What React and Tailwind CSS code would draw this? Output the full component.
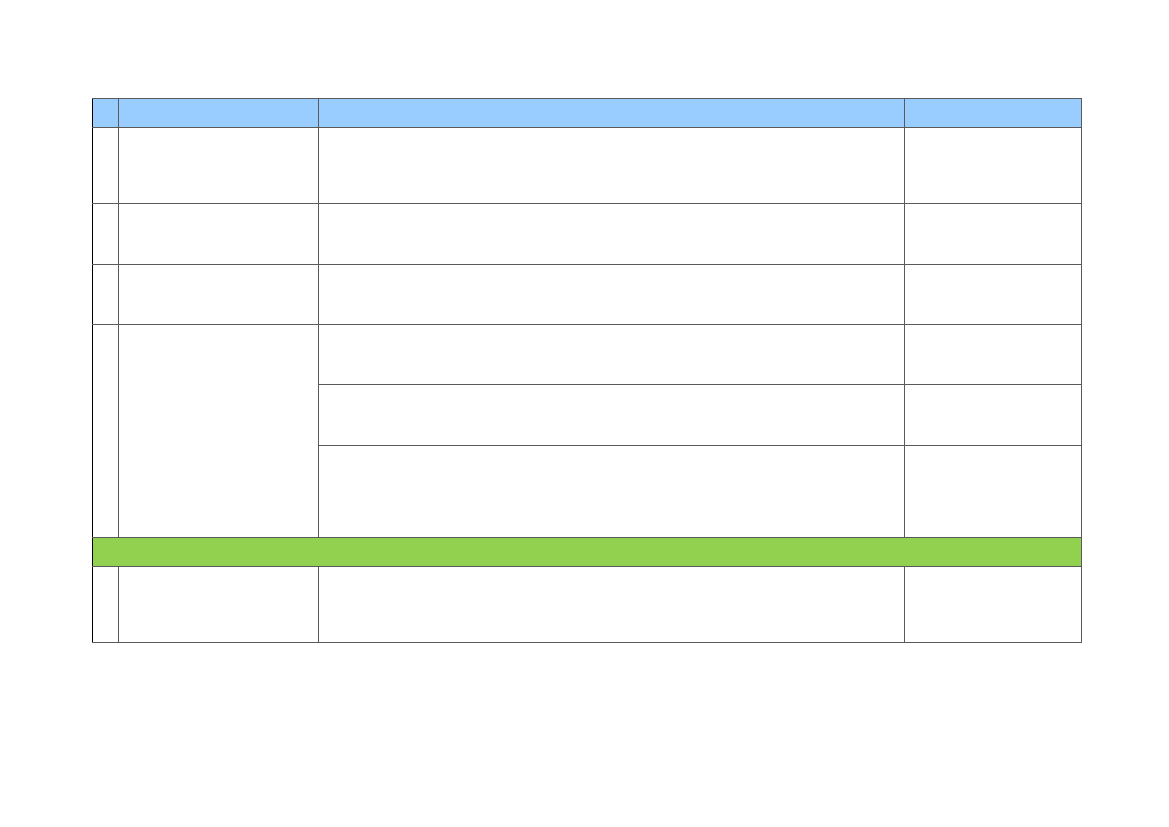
import React from "react";

const cell = "border border-[#5a5a5a] p-0";

export default function App() {
  return (
    <div className="w-[1169px] h-[827px] bg-white pt-[98px] pl-[92px] font-['Liberation_Sans',sans-serif]">
      <table className="table-fixed border-collapse w-[989px] border-l-black">
        <colgroup>
          <col className="w-[26px]" />
          <col className="w-[200px]" />
          <col className="w-[586px]" />
          <col className="w-[177px]" />
        </colgroup>
        <tbody>
          {/* header */}
          <tr className="h-[29px] bg-[#99ccff]">
            <td className={`${cell} border-l-black`} />
            <td className={cell} />
            <td className={cell} />
            <td className={cell} />
          </tr>
          <tr className="h-[76px]">
            <td className={`${cell} border-l-black`} />
            <td className={cell} />
            <td className={cell} />
            <td className={cell} />
          </tr>
          <tr className="h-[61px]">
            <td className={`${cell} border-l-black`} />
            <td className={cell} />
            <td className={cell} />
            <td className={cell} />
          </tr>
          <tr className="h-[60px]">
            <td className={`${cell} border-l-black`} />
            <td className={cell} />
            <td className={cell} />
            <td className={cell} />
          </tr>
          {/* merged block */}
          <tr className="h-[60px]">
            <td rowSpan={3} className={`${cell} border-l-black`} />
            <td rowSpan={3} className={cell} />
            <td className={cell} />
            <td className={cell} />
          </tr>
          <tr className="h-[61px]">
            <td className={cell} />
            <td className={cell} />
          </tr>
          <tr className="h-[92px]">
            <td className={cell} />
            <td className={cell} />
          </tr>
          {/* green band */}
          <tr className="h-[29px] bg-[#92d050]">
            <td colSpan={4} className={`${cell} border-l-black`} />
          </tr>
          <tr className="h-[76px]">
            <td className={`${cell} border-l-black`} />
            <td className={cell} />
            <td className={cell} />
            <td className={cell} />
          </tr>
        </tbody>
      </table>
    </div>
  );
}
